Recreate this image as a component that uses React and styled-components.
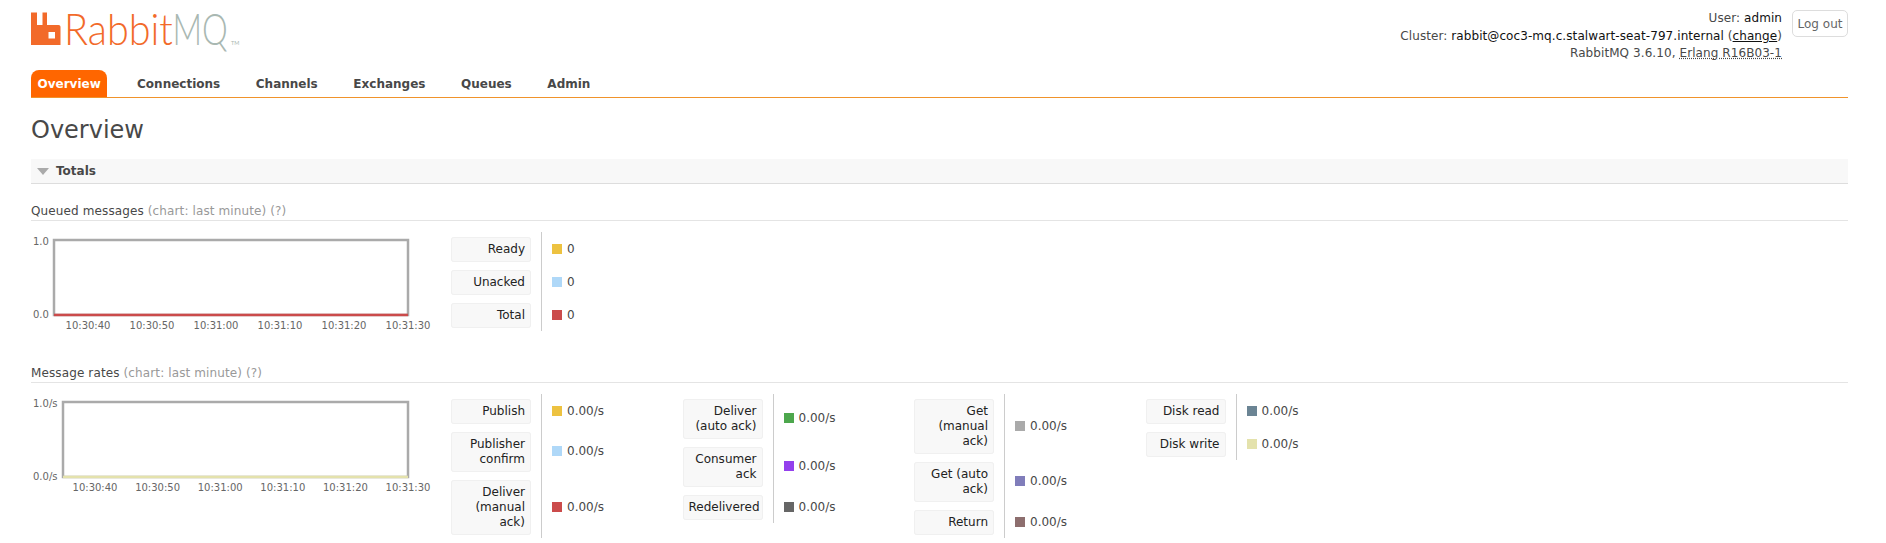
import React from "react";
import styled, { createGlobalStyle } from "styled-components";

const GlobalStyle = createGlobalStyle`
  html, body { margin: 0; padding: 0; background: #fff; }
  body {
    font: 12px "DejaVu Sans", Verdana, sans-serif;
    color: #484848;
  }
`;

const Page = styled.div`
  width: 1886px;
  height: 543px;
  overflow: hidden;
  padding: 0 38px 0 31px;
  box-sizing: border-box;
`;

const Header = styled.header`
  display: flex;
  justify-content: space-between;
  height: 70px;
`;

const LogoWrap = styled.div`
  line-height: 0;
`;

const LoginBox = styled.div`
  display: flex;
  gap: 10px;
  padding-top: 10px;
`;

const LoginInfo = styled.div`
  text-align: right;
  line-height: 17.5px;
  letter-spacing: 0.08px;
  color: #484848;
  b {
    font-weight: normal;
    color: #111;
  }
  u {
    color: #111;
  }
`;

const Abbr = styled.span`
  text-decoration: underline dotted;
`;

const LogoutButton = styled.button`
  width: 56px;
  height: 27px;
  padding: 0;
  font: 12px "DejaVu Sans", Verdana, sans-serif;
  color: #666;
  background: #fff;
  border: 1px solid #ddd;
  border-radius: 5px;
`;

const Menu = styled.nav`
  display: flex;
  height: 27px;
  border-bottom: 1px solid #f0932b;
`;

const MenuItem = styled.a`
  display: flex;
  align-items: center;
  height: 27px;
  padding: 0 ${(p) => (p.$active ? "6.5px" : "17.8px")};
  margin-right: ${(p) => (p.$active ? "12px" : "0")};
  font-weight: bold;
  color: ${(p) => (p.$active ? "#fff" : "#484848")};
  background: ${(p) => (p.$active ? "#f60" : "transparent")};
  border-radius: 8px 8px 0 0;
`;

const Title = styled.h1`
  margin: 18px 0 0;
  font-size: 24px;
  line-height: 29px;
  font-weight: normal;
  color: #484848;
`;

const SectionBar = styled.div`
  display: flex;
  align-items: center;
  gap: 7px;
  height: 25px;
  box-sizing: border-box;
  margin-top: 14px;
  padding-left: 6px;
  font-weight: bold;
  background: #f8f8f8;
  border-bottom: 1px solid #ddd;
`;

const Triangle = styled.span`
  width: 0;
  height: 0;
  border-left: 6px solid transparent;
  border-right: 6px solid transparent;
  border-top: 7px solid #aaa;
`;

const ChartTitle = styled.h3`
  margin: ${(p) => p.$top}px 0 0;
  padding-bottom: 1px;
  font-size: 12px;
  line-height: 16px;
  font-weight: normal;
  letter-spacing: 0.12px;
  color: #484848;
  border-bottom: 1px solid #e4e4e4;
  span {
    color: #999;
  }
`;

const ChartRow = styled.div`
  display: flex;
  margin-top: 11px;
`;

const ChartSvg = styled.svg`
  flex: none;
`;

const Legends = styled.div`
  display: grid;
  grid-template-columns: repeat(4, 231.5px);
  align-items: start;
`;

const LegendTable = styled.div`
  display: grid;
  grid-template-columns: 90px 1fr;
  width: 231.5px;
`;

const LegendLabel = styled.div`
  box-sizing: border-box;
  width: 80px;
  margin: 5px 0 3px;
  padding: 5px 6px;
  text-align: right;
  line-height: 15px;
  color: #222;
  background: #f8f8f8;
  border-radius: 3px;
  box-shadow: 0 0 0 1px #f0f0f0 inset;
`;

const LegendValue = styled.div`
  display: flex;
  align-items: center;
  gap: 5px;
  padding-left: 10px;
  border-left: 1px solid #ccc;
  color: #484848;
`;

const Swatch = styled.i`
  width: 10px;
  height: 10px;
  background: ${(p) => p.$color};
`;

const queued = [
  ["Ready", "#edc240", "0"],
  ["Unacked", "#afd8f8", "0"],
  ["Total", "#cb4b4b", "0"],
];

const rates = [
  [
    ["Publish", "#edc240"],
    ["Publisher confirm", "#afd8f8"],
    ["Deliver (manual ack)", "#cb4b4b"],
  ],
  [
    ["Deliver (auto ack)", "#4da74d"],
    ["Consumer ack", "#9440ed"],
    ["Redelivered", "#666666"],
  ],
  [
    ["Get (manual ack)", "#aaaaaa"],
    ["Get (auto ack)", "#807dba"],
    ["Return", "#8d6e6e"],
  ],
  [
    ["Disk read", "#6b8494"],
    ["Disk write", "#e4e2ac"],
  ],
];

// viewBox starts above the mark so the tall text boxes stay inside the svg
const Logo = () => (
  <svg width="210" height="60" viewBox="0 -12 210 60">
    <path
      fill="#f26a2a"
      fillRule="evenodd"
      d="M0 .5h6V13h5.5V.5H16V13h11.5c1.3 0 2 .8 2 2V33H0zM17.5 20v6.5H24V20z"
    />
    <g fontFamily="Lato, sans-serif" fontWeight="300" fontSize="44">
      <text transform="translate(33 32.5) scale(0.9 1)" fill="#f26a2a">
        Rabbit
      </text>
      <text transform="translate(141.5 32.5) scale(0.74 1)" fill="#a9b8b2">
        MQ
      </text>
    </g>
    <text x="200" y="33" fontFamily="Lato, sans-serif" fontSize="5.5" fill="#a9b8b2">
      TM
    </text>
  </svg>
);

const times = ["10:30:40", "10:30:50", "10:31:00", "10:31:10", "10:31:20", "10:31:30"];

// frameLeft is where the plot starts, it moves with the width of the y labels
const Chart = ({ frameLeft, firstTick, top, bottom, lineColor }) => {
  const step = (377 - firstTick) / 5;
  return (
    <ChartSvg width="420" height="100" viewBox="0 0 420 100">
      <g fontFamily="DejaVu Sans, sans-serif" fontSize="10" fill="#666">
        <text x="2" y="13">
          {top}
        </text>
        <text x="2" y="86">
          {bottom}
        </text>
        {times.map((t, i) => (
          <text key={t} x={firstTick + i * step} y="97" textAnchor="middle">
            {t}
          </text>
        ))}
      </g>
      <rect x={frameLeft} y="8" width={377 - frameLeft} height="75" fill="none" stroke="#aaa" strokeWidth="2.5" />
      <rect x={frameLeft} y="81.7" width={377 - frameLeft} height="2.5" fill={lineColor} />
    </ChartSvg>
  );
};

const Legend = ({ rows }) => (
  <LegendTable>
    {rows.map(([label, color, value]) => (
      <React.Fragment key={label}>
        <LegendLabel>{label}</LegendLabel>
        <LegendValue>
          <Swatch $color={color} />
          {value || "0.00/s"}
        </LegendValue>
      </React.Fragment>
    ))}
  </LegendTable>
);

export default function App() {
  return (
    <Page>
      <GlobalStyle />
      <Header>
        <LogoWrap>
          <Logo />
        </LogoWrap>
        <LoginBox>
          <LoginInfo>
            <div>
              User: <b>admin</b>
            </div>
            <div>
              Cluster: <b>rabbit@coc3-mq.c.stalwart-seat-797.internal</b> (<u>change</u>)
            </div>
            <div>
              RabbitMQ 3.6.10, <Abbr>Erlang R16B03-1</Abbr>
            </div>
          </LoginInfo>
          <LogoutButton>Log out</LogoutButton>
        </LoginBox>
      </Header>
      <Menu>
        <MenuItem $active>Overview</MenuItem>
        <MenuItem>Connections</MenuItem>
        <MenuItem>Channels</MenuItem>
        <MenuItem>Exchanges</MenuItem>
        <MenuItem>Queues</MenuItem>
        <MenuItem>Admin</MenuItem>
      </Menu>
      <Title>Overview</Title>
      <SectionBar>
        <Triangle />
        Totals
      </SectionBar>
      <ChartTitle $top={19}>
        Queued messages <span>(chart: last minute) (?)</span>
      </ChartTitle>
      <ChartRow>
        <Chart frameLeft={23} firstTick={57} top="1.0" bottom="0.0" lineColor="#cb4b4b" />
        <Legends>
          <Legend rows={queued} />
        </Legends>
      </ChartRow>
      <ChartTitle $top={33}>
        Message rates <span>(chart: last minute) (?)</span>
      </ChartTitle>
      <ChartRow>
        <Chart frameLeft={32} firstTick={64} top="1.0/s" bottom="0.0/s" lineColor="#e4e2ac" />
        <Legends>
          {rates.map((rows) => (
            <Legend key={rows[0][0]} rows={rows} />
          ))}
        </Legends>
      </ChartRow>
    </Page>
  );
}
